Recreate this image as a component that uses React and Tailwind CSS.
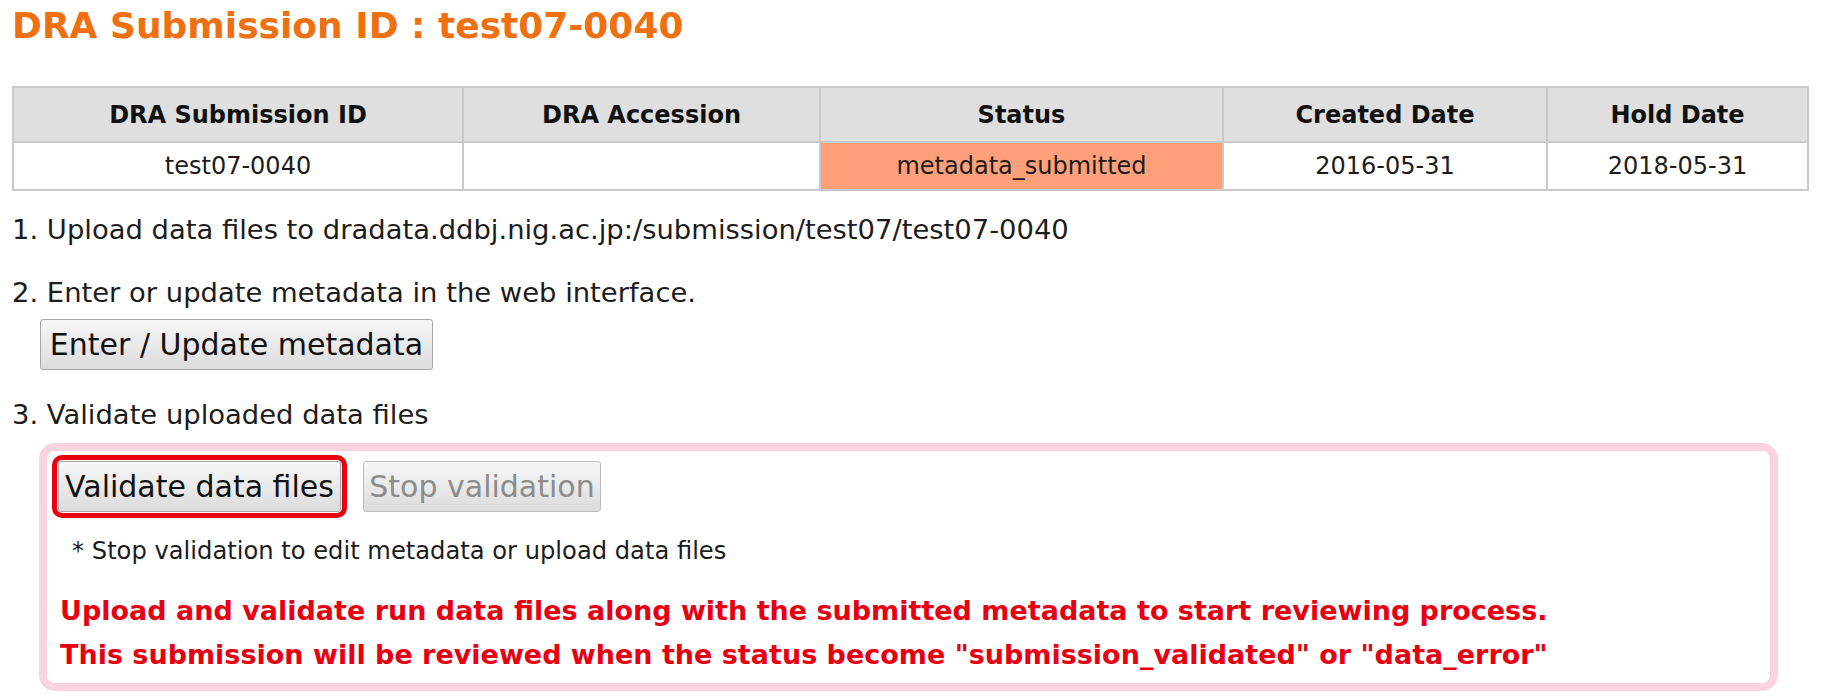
const columns = [
  { label: "DRA Submission ID", value: "test07-0040", width: "w-[450px]" },
  { label: "DRA Accession", value: "", width: "w-[357px]" },
  { label: "Status", value: "metadata_submitted", width: "w-[403px]", highlight: true },
  { label: "Created Date", value: "2016-05-31", width: "w-[324px]" },
  { label: "Hold Date", value: "2018-05-31", width: "w-[261px]" },
]

function LegacyButton({ children, disabled, className = "" }) {
  return (
    <button
      disabled={disabled}
      className={`flex h-[51px] items-center justify-center rounded-[3px] border bg-gradient-to-b from-[#f7f7f7] to-[#dcdcdc] text-[30px] leading-none ${
        disabled ? "border-[#bdbdbd] text-[#8c8c8c]" : "border-[#a7a7a7] text-[#111]"
      } ${className}`}
    >
      {children}
    </button>
  )
}

export default function App() {
  return (
    <div className="min-h-[699px] bg-white pl-[12px] pr-[15px] font-['DejaVu_Sans',sans-serif] text-[#1c1c1c]">
      {/* Title */}
      <h1 className="pt-[4px] text-[36px] font-bold leading-[44px] text-[#ee7011]">
        DRA Submission ID : test07-0040
      </h1>

      {/* Submission summary */}
      <table className="mt-[38px] w-[1795px] table-fixed border-collapse border-2 border-[#c9c9c9]">
        <thead>
          <tr className="h-[55px] bg-[#dfdfdf]">
            {columns.map((c) => (
              <th
                key={c.label}
                className={`${c.width} border-2 border-[#c9c9c9] text-center text-[24px] font-bold text-[#111]`}
              >
                {c.label}
              </th>
            ))}
          </tr>
        </thead>
        <tbody>
          <tr className="h-[48px]">
            {columns.map((c) => (
              <td
                key={c.label}
                className={`border-2 border-[#c9c9c9] text-center text-[24px] ${
                  c.highlight ? "bg-[#ffa07a]" : "bg-white"
                }`}
              >
                {c.value}
              </td>
            ))}
          </tr>
        </tbody>
      </table>

      {/* Steps */}
      <div className="text-[27.4px] leading-[36px]">
        <p className="mt-[21px]">1. Upload data files to dradata.ddbj.nig.ac.jp:/submission/test07/test07-0040</p>
        <p className="mt-[27px]">2. Enter or update metadata in the web interface.</p>
        <LegacyButton className="ml-[28px] mt-[8px] w-[393px]">Enter / Update metadata</LegacyButton>
        <p className="mt-[27px]">3. Validate uploaded data files</p>
      </div>

      <div className="ml-[27px] mt-[10px] w-[1739px] rounded-[16px] border-[8px] border-[#f9d4de] pb-[6px] pl-[5px] pt-[4px]">
        <div className="flex items-center gap-[16px]">
          <div className="rounded-[10px] border-[5px] border-[#e8000e] p-[1px]">
            <LegacyButton className="w-[283px]">Validate data files</LegacyButton>
          </div>
          <LegacyButton disabled className="w-[238px]">Stop validation</LegacyButton>
        </div>
        <p className="mt-[18px] pl-[20px] text-[24.2px] leading-[30px]">
          * Stop validation to edit metadata or upload data files
        </p>
        <div className="mt-[23px] pl-[8px] text-[27px] font-bold leading-[44px] text-[#e60012]">
          <p>Upload and validate run data files along with the submitted metadata to start reviewing process.</p>
          <p>This submission will be reviewed when the status become "submission_validated" or "data_error"</p>
        </div>
      </div>
    </div>
  )
}
